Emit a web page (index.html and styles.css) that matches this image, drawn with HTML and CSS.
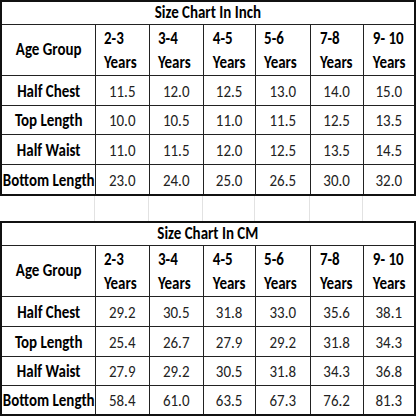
FILE: index.html
```html
<!DOCTYPE html>
<html>
<head>
<meta charset="utf-8">
<link rel="stylesheet" href="styles.css">
</head>
<body>
<div class="page">
<table class="chart">
  <colgroup><col class="c0"><col class="c1"><col class="c2"><col class="c3"><col class="c4"><col class="c5"><col class="c6"></colgroup>
  <tr class="title"><th colspan="7"><span class="t">Size Chart In Inch</span></th></tr>
  <tr class="head">
    <th class="label"><span class="t">Age Group</span></th>
    <th class="age"><span class="t">2-3<br>Years</span></th><th class="age"><span class="t">3-4<br>Years</span></th><th class="age"><span class="t">4-5<br>Years</span></th>
    <th class="age"><span class="t">5-6<br>Years</span></th><th class="age"><span class="t">7-8<br>Years</span></th><th class="age"><span class="t">9- 10<br>Years</span></th>
  </tr>
  <tr class="row"><th class="label"><span class="t">Half Chest</span></th><td><span class="t">11.5</span></td><td><span class="t">12.0</span></td><td><span class="t">12.5</span></td><td><span class="t">13.0</span></td><td><span class="t">14.0</span></td><td><span class="t">15.0</span></td></tr>
  <tr class="row short"><th class="label"><span class="t">Top Length</span></th><td><span class="t">10.0</span></td><td><span class="t">10.5</span></td><td><span class="t">11.0</span></td><td><span class="t">11.5</span></td><td><span class="t">12.5</span></td><td><span class="t">13.5</span></td></tr>
  <tr class="row"><th class="label"><span class="t">Half Waist</span></th><td><span class="t">11.0</span></td><td><span class="t">11.5</span></td><td><span class="t">12.0</span></td><td><span class="t">12.5</span></td><td><span class="t">13.5</span></td><td><span class="t">14.5</span></td></tr>
  <tr class="row"><th class="label"><span class="t">Bottom Length</span></th><td><span class="t">23.0</span></td><td><span class="t">24.0</span></td><td><span class="t">25.0</span></td><td><span class="t">26.5</span></td><td><span class="t">30.0</span></td><td><span class="t">32.0</span></td></tr>
</table>
<div class="gap">
  <span></span><span></span><span></span><span></span><span></span><span></span><span></span>
</div>
<table class="chart">
  <colgroup><col class="c0"><col class="c1"><col class="c2"><col class="c3"><col class="c4"><col class="c5"><col class="c6"></colgroup>
  <tr class="title"><th colspan="7"><span class="t">Size Chart In CM</span></th></tr>
  <tr class="head">
    <th class="label"><span class="t">Age Group</span></th>
    <th class="age"><span class="t">2-3<br>Years</span></th><th class="age"><span class="t">3-4<br>Years</span></th><th class="age"><span class="t">4-5<br>Years</span></th>
    <th class="age"><span class="t">5-6<br>Years</span></th><th class="age"><span class="t">7-8<br>Years</span></th><th class="age"><span class="t">9- 10<br>Years</span></th>
  </tr>
  <tr class="row"><th class="label"><span class="t">Half Chest</span></th><td><span class="t">29.2</span></td><td><span class="t">30.5</span></td><td><span class="t">31.8</span></td><td><span class="t">33.0</span></td><td><span class="t">35.6</span></td><td><span class="t">38.1</span></td></tr>
  <tr class="row"><th class="label"><span class="t">Top Length</span></th><td><span class="t">25.4</span></td><td><span class="t">26.7</span></td><td><span class="t">27.9</span></td><td><span class="t">29.2</span></td><td><span class="t">31.8</span></td><td><span class="t">34.3</span></td></tr>
  <tr class="row short"><th class="label"><span class="t">Half Waist</span></th><td><span class="t">27.9</span></td><td><span class="t">29.2</span></td><td><span class="t">30.5</span></td><td><span class="t">31.8</span></td><td><span class="t">34.3</span></td><td><span class="t">36.8</span></td></tr>
  <tr class="row short"><th class="label"><span class="t">Bottom Length</span></th><td><span class="t">58.4</span></td><td><span class="t">61.0</span></td><td><span class="t">63.5</span></td><td><span class="t">67.3</span></td><td><span class="t">76.2</span></td><td><span class="t">81.3</span></td></tr>
</table>
</div>
</body>
</html>
```
FILE: styles.css
```css
html, body {
  margin: 0;
  padding: 0;
  background: #fff;
}
.page {
  width: 416px;
  height: 416px;
  font-family: Carlito, Calibri, "Liberation Sans Narrow", "DejaVu Sans Condensed", sans-serif;
  color: #111;
}
.chart {
  width: 414px;
  border-collapse: collapse;
  table-layout: fixed;
  border: 2px solid #111;
}
.c0 { width: 94px; }
.c1 { width: 54px; }
.c2 { width: 54px; }
.c3 { width: 52px; }
.c4 { width: 55px; }
.c5 { width: 53px; }
.c6 { width: 52px; }
.chart th, .chart td {
  border: 1px solid #222;
  padding: 0;
  font-size: 17px;
  line-height: 20px;
  vertical-align: middle;
  text-align: center;
  overflow: visible;
}
.chart th {
  font-weight: bold;
  color: #000;
}
.chart td {
  font-weight: normal;
  color: #222;
}
.t {
  display: block;
  width: 114%;
  margin-left: -7%;
  transform: scaleX(0.88);
  white-space: nowrap;
}
.title th {
  height: 22px;
  line-height: 22px;
}
.head th {
  height: 48px;
  padding-top: 2px;
}
.head th.label {
  padding-top: 0;
  height: 50px;
}
.head th.age {
  text-align: left;
  padding-left: 9px;
  line-height: 24px;
}
.row th, .row td {
  height: 27px;
  padding-top: 2px;
}
.row.short th, .row.short td {
  height: 26px;
}
.gap {
  height: 25px;
  display: grid;
  grid-template-columns: 94px 54px 54px 52px 55px 53px 52px;
}
.gap span {
  border-left: 1px solid #e2e2e2;
}
.gap span:first-child {
  border-left: none;
}
```
